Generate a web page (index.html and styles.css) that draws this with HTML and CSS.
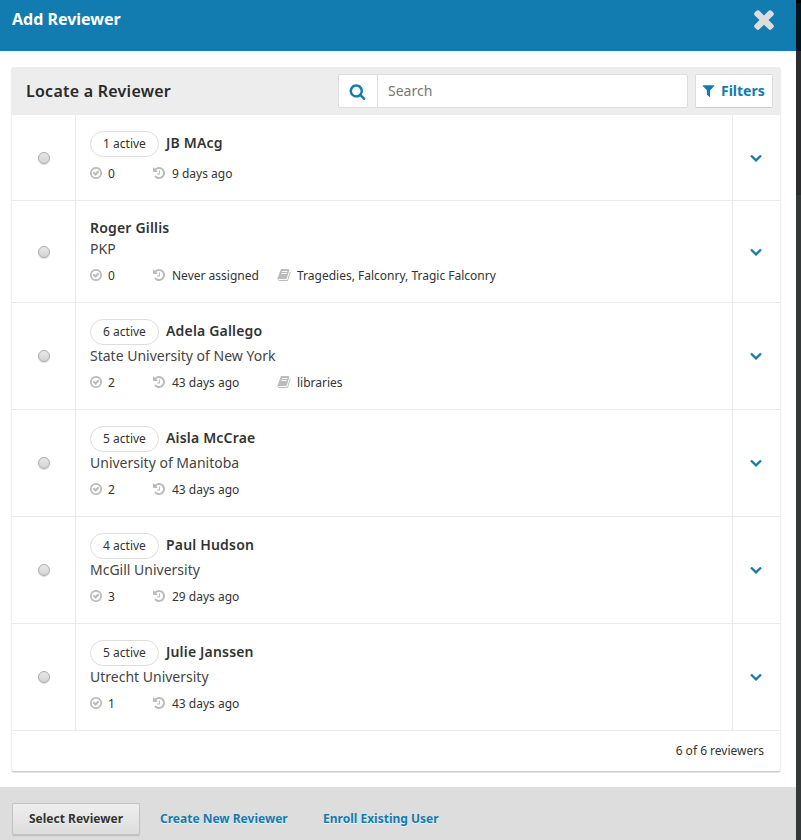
FILE: index.html
```html
<!DOCTYPE html>
<html lang="en">
<head>
<meta charset="utf-8">
<title>Add Reviewer</title>
<link rel="stylesheet" href="styles.css">
</head>
<body>
<svg class="defs" aria-hidden="true">
<symbol id="search" viewBox="0 0 1792 1792"><path d="M1216 832q0-185-131.5-316.5t-316.5-131.5-316.5 131.5-131.5 316.5 131.5 316.5 316.5 131.5 316.5-131.5 131.5-316.5zm512 832q0 52-38 90t-90 38q-54 0-90-38l-343-342q-179 124-399 124-143 0-273.5-55.5t-225-150-150-225-55.5-273.5 55.5-273.5 150-225 225-150 273.5-55.5 273.5 55.5 225 150 150 225 55.5 273.5q0 220-124 399l343 343q37 37 37 90z"/></symbol>
<symbol id="times" viewBox="0 0 1792 1792"><path d="M1490 1322q0 40-28 68l-136 136q-28 28-68 28t-68-28l-294-294-294 294q-28 28-68 28t-68-28l-136-136q-28-28-28-68t28-68l294-294-294-294q-28-28-28-68t28-68l136-136q28-28 68-28t68 28l294 294 294-294q28-28 68-28t68 28l136 136q28 28 28 68t-28 68l-294 294 294 294q28 28 28 68z"/></symbol>
<symbol id="filter" viewBox="0 0 1792 1792"><path d="M1595 295q17 41-14 70l-493 493v742q0 42-39 59-13 5-25 5-27 0-45-19l-256-256q-19-19-19-45v-486l-493-493q-31-29-14-70 17-39 59-39h1280q42 0 59 39z"/></symbol>
<symbol id="history" viewBox="0 0 1792 1792"><path d="M1664 896q0 156-61 298t-164 245-245 164-298 61q-172 0-327-72.500t-264-204.500q-7-10-6.500-22.500t8.500-20.500l137-138q10-9 25-9 16 2 23 12 73 95 179 147t225 52q104 0 198.500-40.500t163.500-109.500 109.500-163.500 40.500-198.500-40.500-198.500-109.500-163.500-163.500-109.500-198.500-40.500q-98 0-188 35.500t-160 101.500l137 138q31 30 14 69-17 40-59 40h-448q-26 0-45-19t-19-45v-448q0-42 40-59 39-17 69 14l130 129q107-101 244.500-156.500t284.500-55.500q156 0 298 61t245 164 164 245 61 298zm-640-288v448q0 14-9 23t-23 9h-320q-14 0-23-9t-9-23v-64q0-14 9-23t23-9h224v-352q0-14 9-23t23-9h64q14 0 23 9t9 23z"/></symbol>
<symbol id="check" viewBox="0 0 1792 1792"><path d="M1299 813l-422 422q-19 19-45 19t-45-19l-294-294q-19-19-19-45t19-45l102-102q19-19 45-19t45 19l147 147 275-275q19-19 45-19t45 19l102 102q19 19 19 45t-19 45zm141 83q0-148-73-273t-198-198-273-73-273 73-198 198-73 273 73 273 198 198 273 73 273-73 198-198 73-273zm224 0q0 209-103 385.500t-279.500 279.500-385.500 103-385.500-103-279.500-279.500-103-385.500 103-385.500 279.500-279.500 385.500-103 385.500 103 279.500 279.500 103 385.500z"/></symbol>
<symbol id="book" viewBox="0 0 1792 1792"><path d="M1703 478q40 57 18 129l-275 906q-19 64-76.500 107.500t-122.500 43.500h-923q-77 0-148.500-53.500t-99.500-131.500q-24-67-2-127 0-4 3-27t4-37q1-8-3-21.500t-3-19.500q2-11 8-21t16.500-23.500 16.500-23.500q23-38 45-91.500t30-91.500q3-10 .5-30t-.5-28q3-11 17-28t17-23q21-36 42-92t25-90q1-9-2.500-32t.5-28q4-13 22-30.500t22-22.500q19-26 42.500-84.500t27.500-96.500q1-8-3-25.500t-2-26.500q2-8 9-18t18-23 17-21q8-12 16.500-30.500t15-35 16-36 19.500-32 26.500-23.500 36-11.500 47.500 5.500l-1 3q38-9 51-9h761q74 0 114 56t18 130l-274 906q-36 119-71.500 153.500t-128.500 34.500h-869q-27 0-38 15-11 16-1 43 24 70 144 70h923q29 0 56-15.500t35-41.500l300-987q7-22 5-57 38 15 59 43zm-1064 2q-4 13 2 22.500t20 9.500h608q13 0 25.500-9.500t16.500-22.500l21-64q4-13-2-22.500t-20-9.500h-608q-13 0-25.500 9.500t-16.500 22.500zm-83 256q-4 13 2 22.500t20 9.500h608q13 0 25.500-9.500t16.500-22.500l21-64q4-13-2-22.500t-20-9.500h-608q-13 0-25.500 9.500t-16.500 22.500z"/></symbol>
<symbol id="down" viewBox="0 0 12 8"><path d="M1 1.500 6 6.400 11 1.500" fill="none" stroke="currentColor" stroke-width="2.300"/></symbol>
</svg>
<div class="modal">
<header class="top"><h1>Add Reviewer</h1><svg class="close"><use href="#times"/></svg></header>
<main class="body">
<section class="panel">
<div class="panel-head">
<h2>Locate a Reviewer</h2>
<div class="search"><span class="search-btn"><svg><use href="#search"/></svg></span><span class="field">Search</span></div>
<div class="filters"><svg><use href="#filter"/></svg><span>Filters</span></div>
</div>
<ul>
<li class="short"><div class="pick"><i></i></div><div class="info"><div class="name"><span class="badge">1 active</span><b>JB MAcg</b></div><div class="meta"><svg><use href="#check"/></svg><span class="count">0</span><svg><use href="#history"/></svg><span class="ago">9 days ago</span></div></div><div class="more"><svg><use href="#down"/></svg></div></li>
<li class="plain"><div class="pick"><i></i></div><div class="info"><div class="name"><b>Roger Gillis</b></div><div class="org">PKP</div><div class="meta"><svg><use href="#check"/></svg><span class="count">0</span><svg><use href="#history"/></svg><span class="ago">Never assigned</span><svg><use href="#book"/></svg><span class="topics">Tragedies, Falconry, Tragic Falconry</span></div></div><div class="more"><svg><use href="#down"/></svg></div></li>
<li><div class="pick"><i></i></div><div class="info"><div class="name"><span class="badge">6 active</span><b>Adela Gallego</b></div><div class="org">State University of New York</div><div class="meta"><svg><use href="#check"/></svg><span class="count">2</span><svg><use href="#history"/></svg><span class="ago">43 days ago</span><svg><use href="#book"/></svg><span class="topics">libraries</span></div></div><div class="more"><svg><use href="#down"/></svg></div></li>
<li><div class="pick"><i></i></div><div class="info"><div class="name"><span class="badge">5 active</span><b>Aisla McCrae</b></div><div class="org">University of Manitoba</div><div class="meta"><svg><use href="#check"/></svg><span class="count">2</span><svg><use href="#history"/></svg><span class="ago">43 days ago</span></div></div><div class="more"><svg><use href="#down"/></svg></div></li>
<li><div class="pick"><i></i></div><div class="info"><div class="name"><span class="badge">4 active</span><b>Paul Hudson</b></div><div class="org">McGill University</div><div class="meta"><svg><use href="#check"/></svg><span class="count">3</span><svg><use href="#history"/></svg><span class="ago">29 days ago</span></div></div><div class="more"><svg><use href="#down"/></svg></div></li>
<li><div class="pick"><i></i></div><div class="info"><div class="name"><span class="badge">5 active</span><b>Julie Janssen</b></div><div class="org">Utrecht University</div><div class="meta"><svg><use href="#check"/></svg><span class="count">1</span><svg><use href="#history"/></svg><span class="ago">43 days ago</span></div></div><div class="more"><svg><use href="#down"/></svg></div></li>
</ul>
<div class="total">6 of 6 reviewers</div>
</section>
</main>
<footer class="actions"><span class="primary">Select Reviewer</span><a class="create">Create New Reviewer</a><a>Enroll Existing User</a></footer>
</div>
</body>
</html>
```
FILE: styles.css
```css
* { box-sizing: border-box; }
body {
  margin: 0;
  height: 840px;
  overflow: hidden;
  background: linear-gradient(#000 0 3px, #001520 3px 51px, #2b2c2d 51px 195px, #353839 195px);
  font-family: "Noto Sans", "Open Sans", sans-serif;
  font-size: 14px;
  color: #333;
}
h1, h2, ul { margin: 0; padding: 0; }
svg { display: block; flex: none; fill: currentColor; }
.defs { display: none; }
.modal { width: 796px; height: 840px; background: #fff; display: flex; flex-direction: column; }
.top {
  height: 51px;
  flex: none;
  display: flex;
  justify-content: space-between;
  padding: 5px 17px 0 12px;
  background: #127bb0;
  color: #fff;
}
h1 { font-size: 16px; line-height: 28px; font-weight: 700; }
.close { width: 30px; height: 30px; margin-top: -1px; color: #ddd; }
.body { padding: 16px 15px 0 11px; height: 736px; }
.panel {
  height: 705px;
  border: 1px solid #eee;
  border-top: 0;
  border-bottom-color: #ccc;
  border-radius: 3px;
  box-shadow: 0 1px 1px #e4e4e4;
}
.panel-head { height: 48px; display: flex; align-items: center; background: #ededed; padding: 0 7px 0 14px; }
h2 { width: 312px; font-size: 16px; font-weight: 600; line-height: 24px; letter-spacing: .25px; color: #292929; }
.search { width: 350px; height: 34px; display: flex; background: #fff; border: 1px solid #ddd; border-radius: 2px; }
.search-btn { width: 39px; border-right: 1px solid #ddd; color: #127bb0; padding: 8px 0 0 10px; }
.search-btn svg { width: 17px; height: 17px; }
.field { padding-left: 10px; line-height: 32px; color: #777; }
.filters {
  width: 78px;
  height: 34px;
  margin-left: 7px;
  display: flex;
  align-items: center;
  padding: 0 0 2px 5px;
  gap: 5px;
  background: #fff;
  border: 1px solid #ddd;
  border-bottom-color: #ccc;
  border-radius: 2px;
  color: #127bb0;
  font-weight: 700;
}
.filters svg { width: 15px; height: 15px; }
ul { list-style: none; }
li { height: 107px; display: flex; border-bottom: 1px solid #eaeaea; }
.short { height: 86px; }
.plain { height: 102px; }
.pick { width: 64px; border-right: 1px solid #eaeaea; display: flex; align-items: center; justify-content: center; }
.pick i { width: 12px; height: 12px; border: 1px solid #aaa; border-radius: 50%; background: linear-gradient(#e8e8e8, #d4d4d4); box-shadow: 0 1px 1px #ddd; }
.info { flex: 1; padding: 16px 0 0 14px; }
.name { display: flex; height: 26px; gap: 7px; }
.name b { font-weight: 600; line-height: 23px; letter-spacing: .18px; }
.badge { width: 69px; height: 26px; border: 1px solid #ddd; border-radius: 13px; text-align: center; font-size: 12px; line-height: 24px; }
.plain .info { padding-top: 15px; }
.plain .name { height: 23px; }
.org { line-height: 22px; height: 22px; color: #444; }
.plain .org { line-height: 20px; }
.meta { display: flex; align-items: center; height: 17px; margin: 7px 0 0 -1px; font-size: 12px; line-height: 17px; }
.short .meta { margin-top: 8px; }
.plain .meta { margin-top: 6px; }
.meta svg { width: 14px; height: 14px; color: #bbb; margin-bottom: 1px; }
.count { width: 49px; padding-left: 5px; }
.ago { width: 111px; padding-left: 6px; }
.ago, .count { flex: none; }
.topics { margin-left: 6px; }
.more { width: 48px; border-left: 1px solid #eaeaea; padding-right: 1px; display: flex; align-items: center; justify-content: center; color: #127bb0; }
.more svg { width: 12px; height: 8px; }
.total { text-align: right; padding-right: 16px; font-size: 12px; line-height: 39px; }
.actions { flex: 1; background: #ddd; display: flex; align-items: center; padding: 10px 12px 0; color: #127bb0; font-size: 12px; font-weight: 700; text-shadow: 0 1px #f5f5f5; }
.primary { width: 128px; height: 32px; margin-right: 20px; border: 1px solid #c4c4c4; border-radius: 2px; background: linear-gradient(#eee, #ddd); box-shadow: 0 1px 1px #bbb; color: #333; line-height: 30px; text-align: center; }
.create { width: 163px; }
```
